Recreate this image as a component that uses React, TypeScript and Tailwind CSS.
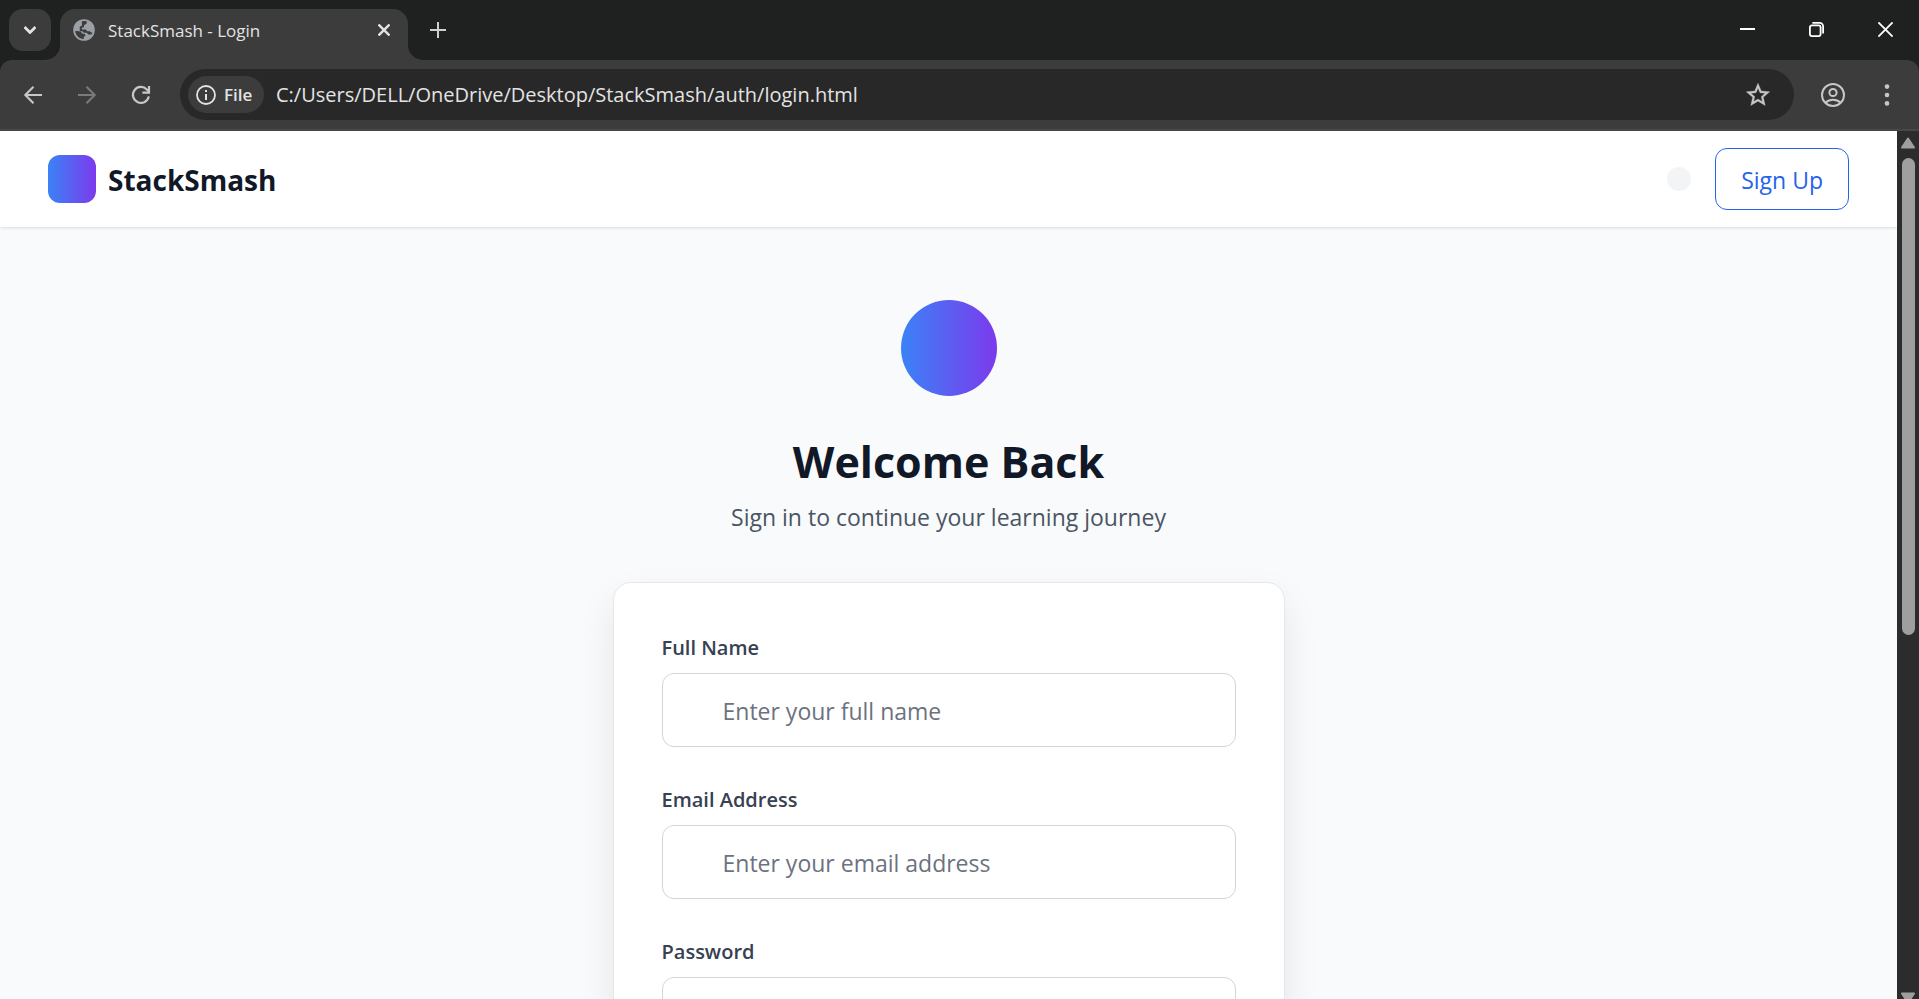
import type { ReactNode } from "react";

const icon = "shrink-0 overflow-visible";

function TabStrip() {
  return (
    <div className="flex h-[60px] shrink-0 items-start bg-[#1f2120] pl-[9px] pt-[9px]">
      <button aria-label="Search tabs" className="flex size-[42px] items-center justify-center rounded-[14px] bg-[#3c3c3c] text-[#e3e3e3]">
        <svg viewBox="0 0 12 8" className="h-2 w-3" fill="none" stroke="currentColor" strokeWidth="2.8">
          <path d="M0.5 1 6 6.5 11.5 1" />
        </svg>
      </button>
      <div className="relative ml-[9px] flex h-[51px] w-[348px] items-center rounded-t-[15px] bg-[#3c3c3c] pb-[9px] pl-[13px] pr-3 text-[#e3e3e3]">
        <svg viewBox="0 0 15 15" className="absolute bottom-0 -left-[15px] size-[15px]" fill="#3c3c3c">
          <path d="M15 0A15 15 0 0 1 0 15H15Z" />
        </svg>
        <svg viewBox="0 0 15 15" className="absolute bottom-0 -right-[15px] size-[15px]" fill="#3c3c3c">
          <path d="M0 0A15 15 0 0 0 15 15H0Z" />
        </svg>
        <svg viewBox="0 0 22 22" className="size-[22px] shrink-0">
          <circle cx="11" cy="11" r="10.8" fill="#9aa0a6" />
          <path d="M2.2 12.2C2.8 16.6 6.2 19.8 10.8 19.9V18L12.6 16.6 11.4 14.8H9.4L7.6 12.6C5.8 11.9 4 11.9 2.2 12.2Z" fill="#3c3c3c" />
          <path d="M8.8 2.5C10.6 1.9 12.6 2 14 2.6L13.4 4.8 11 6.2V8L8.8 8.8V10.4H12.6L14.4 12.2H17L18 13.4H19.4C19.2 14.2 18.8 15 18.4 15.6H15.4L13.6 13.8H11L9.6 12.2H6.8V7.8L9 6.4Z" fill="#3c3c3c" />
        </svg>
        <span className="ml-[13px] pt-0.5 text-[17px] leading-6">StackSmash - Login</span>
        <button aria-label="Close tab" className="ml-auto flex size-6 items-center justify-center">
          <svg viewBox="0 0 12 12" className="size-3" fill="none" stroke="currentColor" strokeWidth="2.4">
            <path d="M0.5 0.5 11.5 11.5M11.5 0.5 0.5 11.5" />
          </svg>
        </button>
      </div>
      <button aria-label="New tab" className="ml-[9px] flex size-[42px] items-center justify-center text-[#d0d0d0]">
        <svg viewBox="0 0 16 16" className="size-4" fill="none" stroke="currentColor" strokeWidth="2">
          <path d="M8 0V16M0 8H16" />
        </svg>
      </button>
      <div className="-mt-[9px] ml-auto flex text-white">
        <button aria-label="Minimize" className="flex h-[58px] w-[69px] items-center justify-center">
          <svg viewBox="0 0 15 2" className="h-0.5 w-[15px]" fill="currentColor"><path d="M0 0H15V2H0Z" /></svg>
        </button>
        <button aria-label="Restore" className="flex h-[58px] w-[69px] items-center justify-center">
          <svg viewBox="0 0 15 15" className="size-[15px]" fill="none" stroke="currentColor" strokeWidth="1.8">
            <rect x="0.9" y="3.4" width="10.7" height="10.7" rx="2" />
            <path d="M3.4 0.9H10.6A3.5 3.5 0 0 1 14.1 4.4V11.4" />
          </svg>
        </button>
        <button aria-label="Close" className="flex h-[58px] w-[68px] items-center justify-center">
          <svg viewBox="0 0 15 15" className="size-[15px]" fill="none" stroke="currentColor" strokeWidth="1.8">
            <path d="M0.4 0.4 14.6 14.6M14.6 0.4 0.4 14.6" />
          </svg>
        </button>
      </div>
    </div>
  );
}

function ToolButton({ label, className = "", children }: { label: string; className?: string; children: ReactNode }) {
  return (
    <button aria-label={label} className={`flex size-[42px] shrink-0 items-center justify-center ${className}`}>
      {children}
    </button>
  );
}

function Toolbar() {
  return (
    <div className="shrink-0 bg-[#1f2120]">
      <div className="flex h-[71px] items-center rounded-t-[12px] border-b-2 border-[#474747] bg-[#3c3c3c] pl-3 pr-[11px] text-[#c7c7c7]">
        <ToolButton label="Back">
          <svg viewBox="0 0 18 18" className={`size-[18px] ${icon}`} fill="none" stroke="currentColor" strokeWidth="2.1">
            <path d="M18 9H1.5M9.5 0.8 1.3 9 9.5 17.2" />
          </svg>
        </ToolButton>
        <ToolButton label="Forward" className="ml-3 text-[#7a7a7a]">
          <svg viewBox="0 0 18 18" className={`size-[18px] ${icon}`} fill="none" stroke="currentColor" strokeWidth="2.1">
            <path d="M0 9H16.5M8.5 0.8 16.7 9 8.5 17.2" />
          </svg>
        </ToolButton>
        <ToolButton label="Reload" className="ml-3">
          <svg viewBox="0 0 18 18" className={`size-[18px] ${icon}`} fill="none" stroke="currentColor" strokeWidth="2.2">
            <path d="M16.8 10.4A8 8 0 1 1 14.8 3.4L16.9 5.6" />
            <path d="M17 0V6.6H10.4" />
          </svg>
        </ToolButton>
        <div className="ml-[18px] flex h-[51px] min-w-0 flex-1 items-center rounded-full bg-[#282828] pl-2 pr-[15px]">
          <button className="flex h-[37px] w-[76px] items-center gap-2 rounded-full bg-[#3c3c3c] pl-2 text-[17px] font-semibold leading-6 text-[#e3e3e3]">
            <svg viewBox="0 0 20 20" className="size-5 shrink-0" fill="none" stroke="currentColor" strokeWidth="1.8">
              <circle cx="10" cy="10" r="9" />
              <path d="M10 9V15M10 5V7.1" strokeWidth="2" />
            </svg>
            File
          </button>
          <input
            aria-label="Address"
            readOnly
            defaultValue="C:/Users/DELL/OneDrive/Desktop/StackSmash/auth/login.html"
            className="ml-3 min-w-0 flex-1 bg-transparent text-[20px] leading-7 text-[#e3e3e3] outline-none"
          />
          <ToolButton label="Bookmark this tab">
            <svg viewBox="0 0 24 24" className="size-[28px]" fill="currentColor" stroke="currentColor" strokeWidth="0.3">
              <path d="m22 9.24-7.19-.62L12 2 9.19 8.63 2 9.24l5.46 4.73L5.82 21 12 17.27 18.18 21l-1.63-7.03L22 9.24zM12 15.4l-3.76 2.27 1-4.28-3.32-2.88 4.38-.38L12 6.1l1.71 4.04 4.38.38-3.32 2.88 1 4.28L12 15.4z" />
            </svg>
          </ToolButton>
        </div>
        <ToolButton label="Profile" className="ml-[18px]">
          <svg viewBox="0 0 24 24" className="size-6" fill="none" stroke="currentColor" strokeWidth="2">
            <circle cx="12" cy="12" r="11" />
            <circle cx="12" cy="9.5" r="3.6" />
            <path d="M4.6 19.6C8.6 15.9 15.4 15.9 19.4 19.6" />
          </svg>
        </ToolButton>
        <ToolButton label="Browser menu" className="ml-3">
          <svg viewBox="0 0 6 22" className="h-[22px] w-1.5" fill="currentColor">
            <circle cx="3" cy="2.6" r="2.3" />
            <circle cx="3" cy="11" r="2.3" />
            <circle cx="3" cy="19.4" r="2.3" />
          </svg>
        </ToolButton>
      </div>
    </div>
  );
}

function Scrollbar() {
  return (
    <div className="flex w-[22px] shrink-0 flex-col items-center bg-[#2c2c2c] pl-1 pr-1">
      <svg viewBox="0 0 14 12" className="mb-[9px] mt-1.5 h-3 w-[14px] shrink-0" fill="#9f9f9f" stroke="#9f9f9f" strokeWidth="2" strokeLinejoin="round">
        <path d="M7 1.5 13 10.5H1Z" />
      </svg>
      <div className="h-[55%] w-[13px] rounded-full bg-[#9f9f9f]" />
      <svg viewBox="0 0 14 7" className="mt-auto h-[7px] w-[14px] shrink-0" fill="#9f9f9f" stroke="#9f9f9f" strokeWidth="2" strokeLinejoin="round">
        <path d="M1 1.5H13L7 10.5Z" />
      </svg>
    </div>
  );
}

function Field({ id, label, type, placeholder }: { id: string; label: string; type: string; placeholder: string }) {
  return (
    <div>
      <label htmlFor={id} className="mb-2.5 block pt-0.5 text-[20px] font-semibold leading-[30px] text-[#374151]">
        {label}
      </label>
      <input
        id={id}
        type={type}
        placeholder={placeholder}
        className="block h-[74px] w-full rounded-xl border border-[#d1d5db] bg-white pl-[60px] pr-6 pt-0.5 text-[23px] leading-9 text-[#111827] placeholder:text-[#6b7280]"
      />
    </div>
  );
}

export default function App() {
  return (
    <div className="flex h-screen flex-col overflow-hidden font-['Open_Sans','Noto_Sans',sans-serif]">
      <TabStrip />
      <Toolbar />
      <div className="flex min-h-0 flex-1">
        <div className="flex min-w-0 flex-1 flex-col overflow-hidden bg-[#f9fafb]">
          <header className="relative flex h-24 shrink-0 items-center justify-between bg-white px-12 shadow-[0_1px_3px_rgba(0,0,0,0.12)]">
            <div className="flex items-center gap-3">
              <div className="size-12 rounded-xl bg-[linear-gradient(90deg,#3b82f6,#7c3aed)]" />
              <span className="pt-0.5 text-[28px] font-bold leading-[42px] text-[#111827]">StackSmash</span>
            </div>
            <div className="flex items-center gap-6">
              <button aria-label="Toggle theme" className="size-6 rounded-full bg-[#f3f4f6]" />
              <a href="#signup" className="rounded-xl border border-[#2563eb] px-[25px] pb-[11px] pt-[13px] text-[23px] leading-9 text-[#2563eb]">
                Sign Up
              </a>
            </div>
          </header>
          <main className="flex flex-col items-center px-6 pt-[73px]">
            <div className="size-24 shrink-0 rounded-full bg-[linear-gradient(90deg,#3b82f6,#7c3aed)]" />
            <h1 className="mt-[39px] text-[43px] font-bold leading-[54px] text-[#111827]">Welcome Back</h1>
            <p className="mt-2.5 text-[23px] leading-9 text-[#4b5563]">Sign in to continue your learning journey</p>
            <form className="mt-[47px] flex w-full max-w-[672px] flex-col gap-9 rounded-[18px] border border-[#e5e7eb] bg-white p-12 shadow-[0_15px_38px_-4px_rgba(0,0,0,0.1)]">
              <Field id="name" label="Full Name" type="text" placeholder="Enter your full name" />
              <Field id="email" label="Email Address" type="email" placeholder="Enter your email address" />
              <Field id="password" label="Password" type="password" placeholder="Enter your password" />
            </form>
          </main>
        </div>
        <Scrollbar />
      </div>
    </div>
  );
}
